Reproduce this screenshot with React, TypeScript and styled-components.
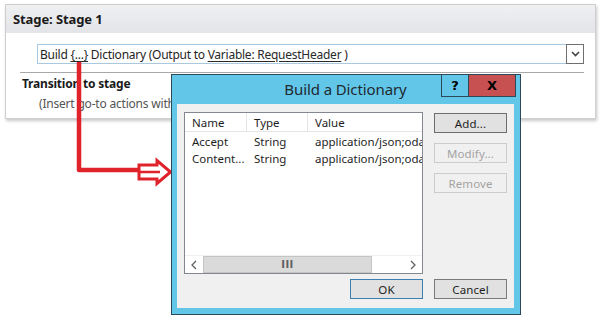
import React from "react";
import styled, { createGlobalStyle } from "styled-components";

const Global = createGlobalStyle`
  html, body { margin: 0; padding: 0; background: #ffffff; }
  body { font-family: "Noto Sans", "Open Sans", sans-serif; color: #1e1e1e; }
  * { box-sizing: border-box; }
`;

const Page = styled.div`
  position: relative;
  width: 601px;
  height: 322px;
  overflow: hidden;
  padding: 4px 5px 0 5px;
`;

const StagePanel = styled.section`
  width: 591px;
  height: 115px;
  border: 1px solid #cfcfcf;
  background: #ffffff;
  box-shadow: 1px 2px 3px rgba(0, 0, 0, 0.22);
  display: flex;
  flex-direction: column;
`;

const StageHeader = styled.div`
  height: 28px;
  background: linear-gradient(#eef0f2, #e2e4e7);
  display: flex;
  align-items: center;
  padding-left: 7px;
  font-size: 13px;
  font-weight: 700;
  color: #1a1a1a;
  letter-spacing: -0.1px;
`;

const StageBody = styled.div`
  display: flex;
  flex-direction: column;
  padding: 11px 11px 0 14px;
`;

const ActionRow = styled.div`
  margin-left: 17px;
  height: 20px;
  border: 1px solid #a9c9e2;
  display: flex;
  align-items: center;
  padding-left: 2px;
  font-size: 12px;
  letter-spacing: -0.25px;
  color: #1e1e1e;
`;

const ActionText = styled.span`
  flex: 1;
  white-space: nowrap;
`;

const Link = styled.span`
  text-decoration: underline;
  text-underline-offset: 2px;
  color: #2a2a2a;
`;

const DropButton = styled.div`
  width: 18px;
  height: 20px;
  margin: -1px -1px -1px 0;
  border: 1px solid #6f6f6f;
  display: flex;
  align-items: center;
  justify-content: center;
  background: #ffffff;
`;

const Separator = styled.div`
  height: 1px;
  background: #a8a8a8;
  margin: 8px 0 0 0;
`;

const TransitionTitle = styled.div`
  font-size: 12px;
  font-weight: 700;
  margin: 2px 0 0 2px;
  letter-spacing: -0.2px;
  color: #1a1a1a;
`;

const TransitionHint = styled.div`
  font-size: 12px;
  margin: 3px 0 0 19px;
  color: #555555;
  letter-spacing: -0.2px;
  white-space: nowrap;
`;

const Dialog = styled.div`
  position: absolute;
  left: 171px;
  top: 74px;
  width: 350px;
  height: 241px;
  background: #62c6e9;
  border: 1px solid #2d4a5a;
  display: flex;
  flex-direction: column;
  padding: 0 6px 6px 5px;
`;

const TitleBar = styled.div`
  height: 29px;
  display: flex;
  align-items: flex-start;
  position: relative;
`;

const Title = styled.div`
  position: absolute;
  left: 0;
  right: 0;
  top: 4px;
  text-align: center;
  font-size: 15px;
  color: #1f2a30;
  letter-spacing: -0.1px;
`;

const Caption = styled.div`
  margin-left: auto;
  margin-right: -2px;
  display: flex;
  margin-top: -1px;
  z-index: 1;
`;

const CapButton = styled.div<{ $close?: boolean }>`
  width: ${(p) => (p.$close ? 48 : 28)}px;
  height: 23px;
  border: 1px solid #2d4a5a;
  margin-left: ${(p) => (p.$close ? -1 : 0)}px;
  background: ${(p) => (p.$close ? "#c75050" : "#62c6e9")};
  display: flex;
  align-items: center;
  justify-content: center;
  font-weight: 700;
  font-size: 13px;
  color: #000;
  font-family: "DejaVu Sans", sans-serif;
`;

const Client = styled.div`
  flex: 1;
  background: #f0f0f0;
  display: grid;
  grid-template-columns: 239px 73px;
  grid-template-rows: 162px 1fr;
  column-gap: 11px;
  padding: 8px 0 0 7px;
`;

const ListBox = styled.div`
  border: 1px solid #828790;
  background: #ffffff;
  display: flex;
  flex-direction: column;
  font-size: 11.5px;
  overflow: hidden;
`;

const ListHeader = styled.div`
  display: grid;
  grid-template-columns: 62px 61px 1fr;
  height: 19px;
  border-bottom: 1px solid #e5e5e5;
`;

const HeaderCell = styled.div<{ $last?: boolean }>`
  padding-left: 7px;
  display: flex;
  align-items: center;
  border-right: ${(p) => (p.$last ? "none" : "1px solid #e5e5e5")};
  color: #1e1e1e;
`;

const Rows = styled.div`
  flex: 1;
  padding-top: 1px;
`;

const Row = styled.div`
  display: grid;
  grid-template-columns: 62px 61px 1fr;
  height: 17px;
  align-items: center;
  white-space: nowrap;
`;

const Cell = styled.div`
  padding-left: 7px;
  overflow: hidden;
`;

const ScrollBar = styled.div`
  height: 18px;
  display: flex;
  border-top: 1px solid #f0f0f0;
`;

const ScrollArrow = styled.div`
  width: 18px;
  display: flex;
  align-items: center;
  justify-content: center;
  background: #ffffff;
`;

const ScrollTrack = styled.div`
  flex: 1;
  display: flex;
  background: #ffffff;
`;

const Thumb = styled.div`
  width: 169px;
  background: #dadada;
  border: 1px solid #c5c5c5;
  display: flex;
  align-items: center;
  justify-content: center;
  font-size: 10px;
  font-weight: 700;
  letter-spacing: 0.5px;
  color: #606060;
  font-family: "DejaVu Sans", sans-serif;
`;

const SideButtons = styled.div`
  display: flex;
  flex-direction: column;
  gap: 10px;
  padding-top: 1px;
`;

const Button = styled.div<{ $disabled?: boolean; $tone?: "focus" | "default" | "plain" }>`
  width: 73px;
  height: 20px;
  display: flex;
  align-items: center;
  justify-content: center;
  font-size: 11.5px;
  letter-spacing: 0.1px;
  color: ${(p) => (p.$disabled ? "#a3a3a3" : "#1e1e1e")};
  background: ${(p) => (p.$disabled ? "#f0f0f0" : "#e1e1e1")};
  border: 1px solid
    ${(p) =>
      p.$disabled
        ? "#cccccc"
        : p.$tone === "focus"
        ? "#6d6d6d"
        : p.$tone === "default"
        ? "#3c7fb1"
        : "#7a7a7a"};
`;

const Footer = styled.div`
  grid-column: 1 / 3;
  display: flex;
  justify-content: flex-end;
  gap: 11px;
  padding-top: 5px;
`;

const ArrowOverlay = styled.svg`
  position: absolute;
  left: 0;
  top: 0;
  pointer-events: none;
`;

const Chevron = ({ dir }: { dir: "left" | "right" | "down" }) => {
  if (dir === "down")
    return (
      <svg width="9" height="6" viewBox="0 0 9 6">
        <path d="M1 1 L4.5 4.5 L8 1" stroke="#444" strokeWidth="1.6" fill="none" />
      </svg>
    );
  return (
    <svg width="6" height="10" viewBox="0 0 6 10">
      <path
        d={dir === "left" ? "M5 1 L1 5 L5 9" : "M1 1 L5 5 L1 9"}
        stroke="#606060"
        strokeWidth="1.3"
        fill="none"
      />
    </svg>
  );
};

export default function App() {
  return (
    <Page>
      <Global />
      <StagePanel>
        <StageHeader>Stage: Stage 1</StageHeader>
        <StageBody>
          <ActionRow>
            <ActionText>
              Build <Link>{"{...}"}</Link> Dictionary (Output to <Link>Variable: RequestHeader</Link> )
            </ActionText>
            <DropButton>
              <Chevron dir="down" />
            </DropButton>
          </ActionRow>
          <Separator />
          <TransitionTitle>Transition to stage</TransitionTitle>
          <TransitionHint>(Insert go-to actions with conditions)</TransitionHint>
        </StageBody>
      </StagePanel>

      <ArrowOverlay width="601" height="322" viewBox="0 0 601 322">
        <path d="M79 62 L79 170 L140 170" stroke="#e0232b" strokeWidth="4.5" fill="none" strokeLinejoin="round" />
        <polygon
          points="139,165 157,165 157,160.5 170.5,172 157,183.5 157,179 139,179"
          fill="#ffffff"
          stroke="#e0232b"
          strokeWidth="3"
          strokeLinejoin="miter"
        />
        <line x1="139" y1="172" x2="160" y2="172" stroke="#e0232b" strokeWidth="2.5" />
      </ArrowOverlay>

      <Dialog>
        <TitleBar>
          <Title>Build a Dictionary</Title>
          <Caption>
            <CapButton>?</CapButton>
            <CapButton $close>X</CapButton>
          </Caption>
        </TitleBar>
        <Client>
          <ListBox>
            <ListHeader>
              <HeaderCell>Name</HeaderCell>
              <HeaderCell>Type</HeaderCell>
              <HeaderCell $last>Value</HeaderCell>
            </ListHeader>
            <Rows>
              <Row>
                <Cell>Accept</Cell>
                <Cell>String</Cell>
                <Cell>application/json;odata=verbose</Cell>
              </Row>
              <Row>
                <Cell>Content...</Cell>
                <Cell>String</Cell>
                <Cell>application/json;odata=verbose</Cell>
              </Row>
            </Rows>
            <ScrollBar>
              <ScrollArrow>
                <Chevron dir="left" />
              </ScrollArrow>
              <ScrollTrack>
                <Thumb>III</Thumb>
              </ScrollTrack>
              <ScrollArrow>
                <Chevron dir="right" />
              </ScrollArrow>
            </ScrollBar>
          </ListBox>
          <SideButtons>
            <Button $tone="focus">Add...</Button>
            <Button $disabled>Modify...</Button>
            <Button $disabled>Remove</Button>
          </SideButtons>
          <Footer>
            <Button $tone="default">OK</Button>
            <Button $tone="plain">Cancel</Button>
          </Footer>
        </Client>
      </Dialog>
    </Page>
  );
}
